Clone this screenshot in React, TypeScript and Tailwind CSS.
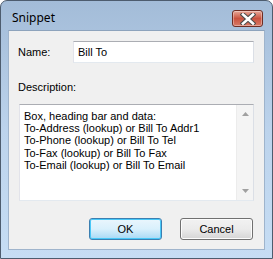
import React from "react";

const UI = { fontFamily: '"Liberation Sans", Arial, sans-serif' };

function CloseGlyph() {
  return (
    <svg width="16" height="12" viewBox="0 0 16 12">
      <path d="M3 1.5 L13 10.5 M13 1.5 L3 10.5" stroke="#4a4a4a" strokeWidth="4.6" strokeLinecap="square" />
      <path d="M3 1.5 L13 10.5 M13 1.5 L3 10.5" stroke="#ffffff" strokeWidth="2.6" strokeLinecap="square" />
    </svg>
  );
}

function Arrow({ up }: { up?: boolean }) {
  return (
    <svg width="7" height="4" viewBox="0 0 7 4">
      <path d={up ? "M0 4 L3.5 0 L7 4 Z" : "M0 0 L3.5 4 L7 0 Z"} fill="#a0a0a0" />
    </svg>
  );
}

export default function App() {
  const lines = [
    "Box, heading bar and data:",
    "To-Address (lookup) or Bill To Addr1",
    "To-Phone (lookup) or Bill To Tel",
    "To-Fax (lookup) or Bill To Fax",
    "To-Email (lookup) or Bill To Email",
  ];
  return (
    <div className="w-[273px] h-[259px] bg-white">
      <div className="relative w-[273px] h-[259px] rounded-t-[7px] border border-[#4d5c6e] bg-gradient-to-b from-[#a3bcd8] via-[#bcd3ec] to-[#c6ddf4] flex flex-col">
        {/* title bar */}
        <div className="h-[29px] flex items-start">
          <div className="ml-[11px] mt-[10px] text-[12px] leading-[14px] text-black" style={{ fontFamily: '"Noto Sans", "Open Sans", sans-serif' }}>
            Snippet
          </div>
          <div className="ml-auto mr-[9px] mt-[9px] w-[31px] h-[17px] rounded-[3px] border border-[#6e2d24] bg-gradient-to-b from-[#e7a899] via-[#c9523f] to-[#d77966] flex items-center justify-center shadow-[inset_0_0_0_1px_rgba(255,255,255,0.35)]">
            <CloseGlyph />
          </div>
        </div>
        {/* client */}
        <div className="ml-[7px] mr-[7px] h-[220px] bg-[#f0f0f0] border border-[#9fb4cc] border-t-[#8da3bc] flex flex-col pl-[9px] text-[11px] text-black" style={UI}>
          <div className="mt-[10px] flex items-center">
            <div className="w-[55px]">Name:</div>
            <div className="w-[181px] h-[22px] bg-white border border-[#abadb3] border-r-[#dbdfe6] border-b-[#e3e9ef] border-l-[#e2e3ea] flex items-center pl-[4px] leading-[13px]">
              Bill To
            </div>
          </div>
          <div className="mt-[18px] leading-[13px]">Description:</div>
          <div className="mt-[10px] ml-[1px] w-[235px] h-[97px] bg-white border border-[#abadb3] border-r-[#dbdfe6] border-b-[#e3e9ef] border-l-[#e2e3ea] flex">
            <div className="flex-1 pl-[4px] pt-[5px] leading-[12.2px]">
              {lines.map((l) => (
                <div key={l}>{l}</div>
              ))}
            </div>
            <div className="w-[17px] h-full bg-[#f4f4f4] border-l border-[#ececec] flex flex-col items-center justify-between py-[7px]">
              <Arrow up />
              <Arrow />
            </div>
          </div>
          <div className="mt-[17px] flex">
            <div className="ml-[71px] w-[73px] h-[22px] rounded-[3px] border border-[#3c7fb1] bg-gradient-to-b from-[#eaf6fd] via-[#d9f0fc] to-[#a7d9f5] shadow-[inset_0_0_0_1px_#48c8f8] flex items-center justify-center">
              OK
            </div>
            <div className="ml-[18px] w-[73px] h-[22px] rounded-[3px] border border-[#707070] bg-gradient-to-b from-[#f2f2f2] via-[#ebebeb] to-[#d5d5d5] shadow-[inset_0_0_0_1px_#fcfcfc] flex items-center justify-center">
              Cancel
            </div>
          </div>
        </div>
      </div>
    </div>
  );
}
